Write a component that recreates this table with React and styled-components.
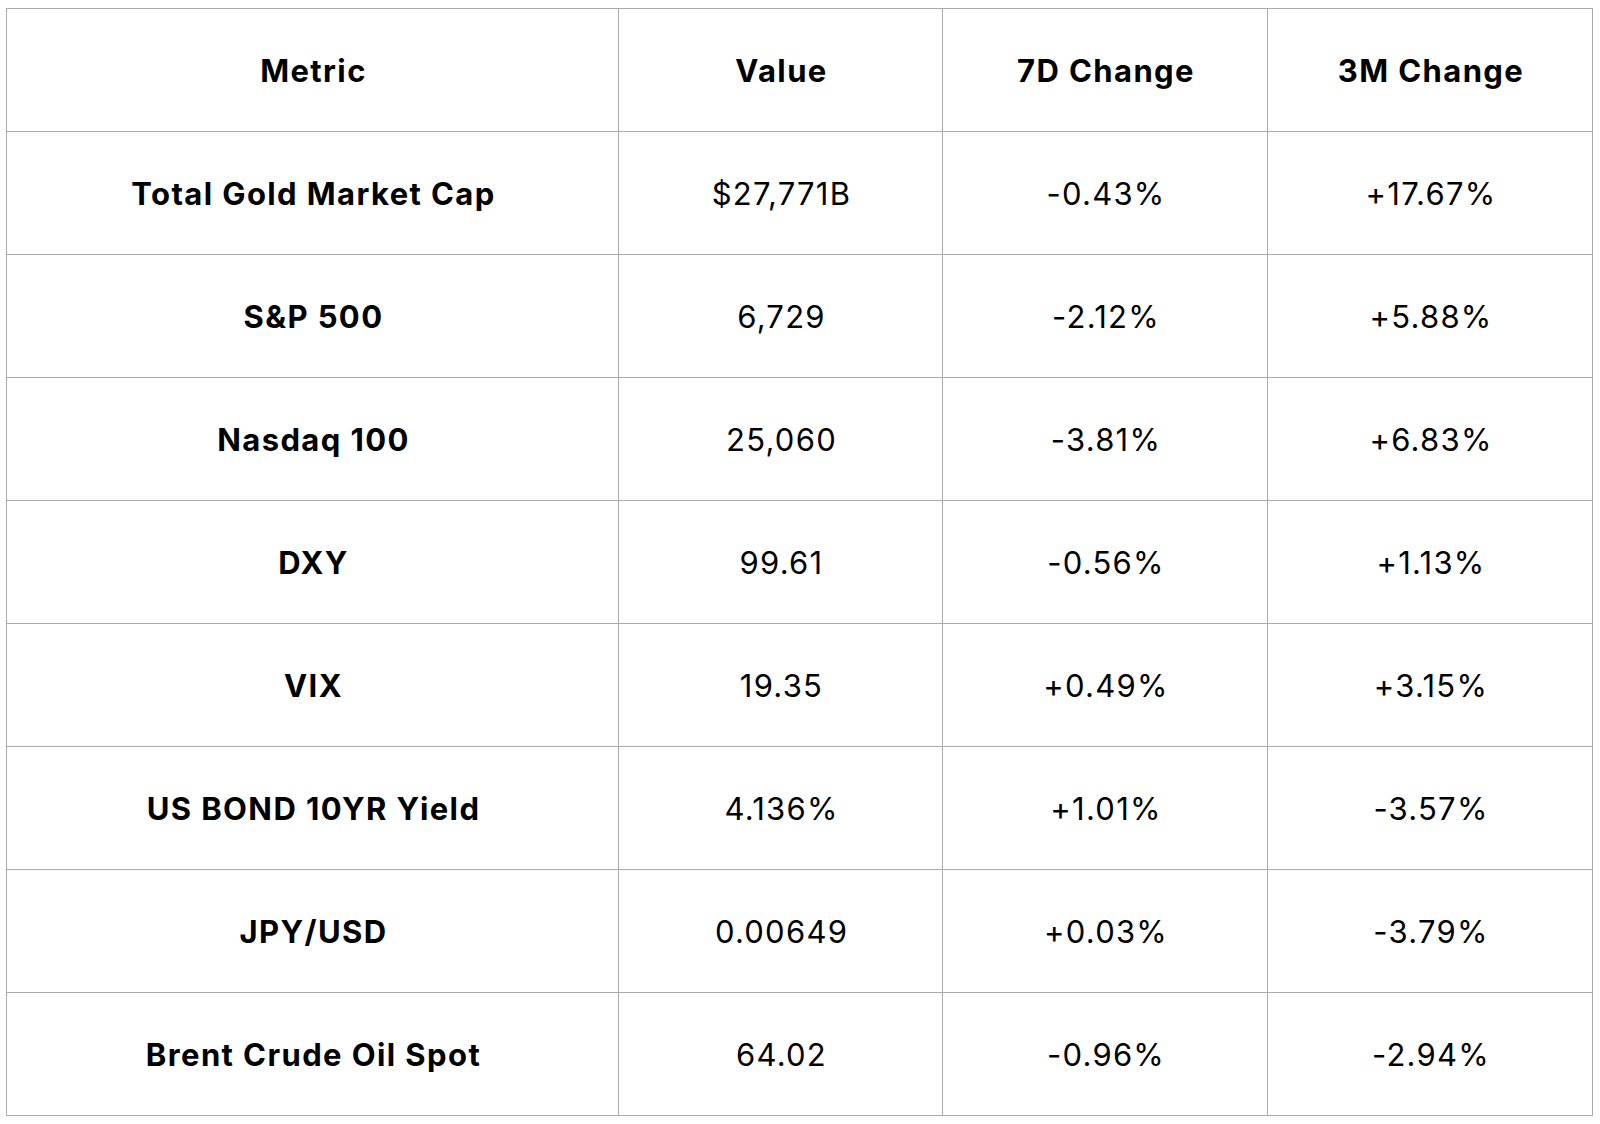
import React from "react";
import styled, { createGlobalStyle } from "styled-components";

const Global = createGlobalStyle`
  html, body { margin: 0; padding: 0; background: #ffffff; }
  body { font-family: Inter, "Open Sans", "Liberation Sans", sans-serif; color: #000; }
`;

const Page = styled.div`
  padding: 8px 9px 9px 6px;
`;

const Table = styled.table`
  width: 1586px;
  border-collapse: collapse;
  table-layout: fixed;
  border: 1px solid #ababab;
`;

const HeadCell = styled.th`
  height: 122px;
  border: 1px solid #ababab;
  padding: 0 0 0 2px;
  text-align: center;
  vertical-align: middle;
  font-size: 31px;
  font-weight: 700;
  letter-spacing: 1.4px;
`;

const Cell = styled.td`
  height: 122px;
  border: 1px solid #ababab;
  padding: 0 0 0 2px;
  text-align: center;
  vertical-align: middle;
  font-size: 31px;
  font-weight: ${(p) => (p.$strong ? 700 : 400)};
  letter-spacing: ${(p) => (p.$strong ? "1.4px" : "1.25px")};
`;

const widths = [612, 324, 325, 325];

const rows = [
  ["Total Gold Market Cap", "$27,771B", "-0.43%", "+17.67%"],
  ["S&P 500", "6,729", "-2.12%", "+5.88%"],
  ["Nasdaq 100", "25,060", "-3.81%", "+6.83%"],
  ["DXY", "99.61", "-0.56%", "+1.13%"],
  ["VIX", "19.35", "+0.49%", "+3.15%"],
  ["US BOND 10YR Yield", "4.136%", "+1.01%", "-3.57%"],
  ["JPY/USD", "0.00649", "+0.03%", "-3.79%"],
  ["Brent Crude Oil Spot", "64.02", "-0.96%", "-2.94%"],
];

export default function App() {
  return (
    <Page>
      <Global />
      <Table>
        <colgroup>
          {widths.map((w, i) => (
            <col key={i} style={{ width: w }} />
          ))}
        </colgroup>
        <thead>
          <tr>
            <HeadCell>Metric</HeadCell>
            <HeadCell>Value</HeadCell>
            <HeadCell>7D Change</HeadCell>
            <HeadCell>3M Change</HeadCell>
          </tr>
        </thead>
        <tbody>
          {rows.map((r) => (
            <tr key={r[0]}>
              {r.map((c, i) => (
                <Cell key={i} $strong={i === 0}>
                  {c}
                </Cell>
              ))}
            </tr>
          ))}
        </tbody>
      </Table>
    </Page>
  );
}
